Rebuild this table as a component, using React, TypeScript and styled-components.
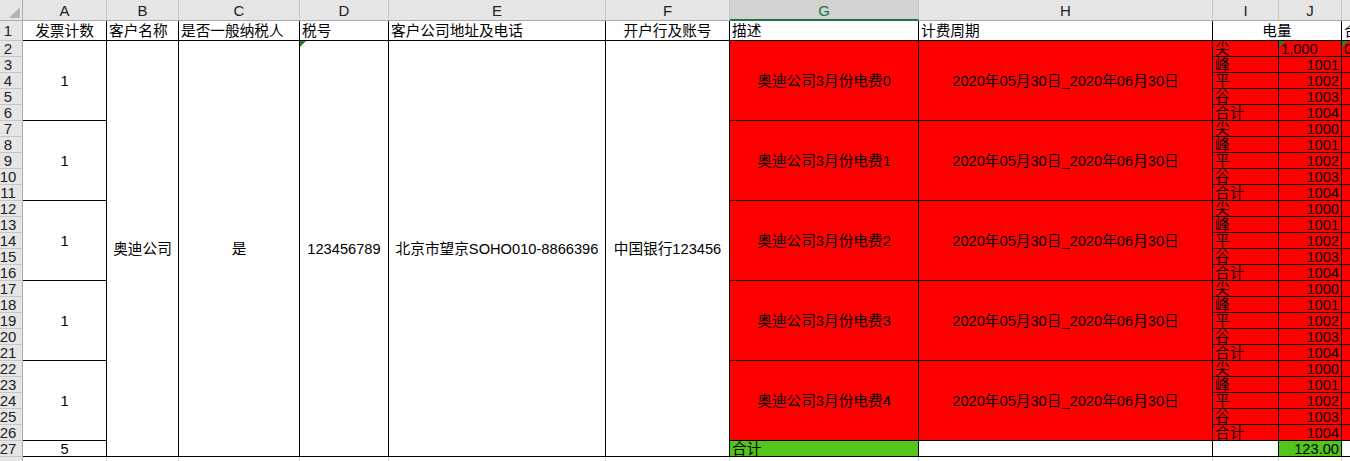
import React from "react";
import styled, { createGlobalStyle, css } from "styled-components";

const GlobalStyle = createGlobalStyle`
  html, body {
    margin: 0;
    padding: 0;
    background: #ffffff;
    overflow: hidden;
  }
  body {
    font-family: "Liberation Sans", "Noto Sans CJK SC", sans-serif;
  }
`;

const COL_WIDTHS = [23, 84, 72, 121, 89, 217, 124, 189, 294, 66, 63, 90];
const LETTERS = ["A", "B", "C", "D", "E", "F", "G", "H", "I", "J", "K"];
const ROW_COUNT = 28;

const RED = "#ff0000";
const GREEN = "#52c41a";

const Sheet = styled.div`
  display: grid;
  grid-template-columns: ${COL_WIDTHS.map((w) => `${w}px`).join(" ")};
  grid-template-rows: 21px 20px repeat(${ROW_COUNT - 1}, 16px);
  width: max-content;
`;

const Corner = styled.div`
  grid-column: 1;
  grid-row: 1;
  background: #e6e6e6;
  border-right: 1px solid #ababab;
  border-bottom: 1px solid #ababab;
  display: flex;
  align-items: flex-end;
  justify-content: flex-end;
  padding: 0 2px 2px 0;
  box-sizing: border-box;
`;

const ColHead = styled.div<{ $c: number; $selected?: boolean }>`
  grid-column: ${(p) => p.$c};
  grid-row: 1;
  background: ${(p) => (p.$selected ? "#d2d2d2" : "#e6e6e6")};
  border-right: 1px solid #c6c6c6;
  border-bottom: ${(p) => (p.$selected ? "2px solid #217346" : "1px solid #ababab")};
  color: ${(p) => (p.$selected ? "#217346" : "#222")};
  font-size: 15px;
  display: flex;
  align-items: center;
  justify-content: center;
  box-sizing: border-box;
  overflow: hidden;
  padding-top: 1px;
`;

const RowHead = styled.div<{ $r: number }>`
  grid-column: 1;
  grid-row: ${(p) => p.$r};
  background: #e6e6e6;
  border-right: 1px solid #ababab;
  border-bottom: 1px solid #c6c6c6;
  color: #222;
  font-size: 15px;
  line-height: 15px;
  display: flex;
  align-items: center;
  justify-content: center;
  padding-right: 6px;
  box-sizing: border-box;
  overflow: hidden;
`;

type Align = "left" | "center" | "right";

const Cell = styled.div<{
  $c: number;
  $r: number;
  $cs?: number;
  $rs?: number;
  $align?: Align;
  $bg?: string;
  $mark?: boolean;
}>`
  grid-column: ${(p) => p.$c} / span ${(p) => p.$cs ?? 1};
  grid-row: ${(p) => p.$r} / span ${(p) => p.$rs ?? 1};
  background: ${(p) => p.$bg ?? "#ffffff"};
  border-right: 1px solid #000;
  border-bottom: 1px solid #000;
  box-sizing: border-box;
  display: flex;
  align-items: center;
  justify-content: ${(p) =>
    p.$align === "center" ? "center" : p.$align === "right" ? "flex-end" : "flex-start"};
  padding: 0 2px;
  font-size: 14.67px;
  line-height: 16px;
  color: #000;
  white-space: nowrap;
  overflow: hidden;
  position: relative;
  ${(p) =>
    p.$mark &&
    css`
      &::before {
        content: "";
        position: absolute;
        left: 0;
        top: 0;
        width: 0;
        height: 0;
        border-top: 6px solid #1f8a1f;
        border-right: 6px solid transparent;
      }
    `}
`;

const BlankCell = styled.div<{ $c: number; $r: number }>`
  grid-column: ${(p) => p.$c};
  grid-row: ${(p) => p.$r};
  border-right: 1px solid #d4d4d4;
  border-bottom: 1px solid #d4d4d4;
  box-sizing: border-box;
`;

// spreadsheet row n -> grid row n + 1, column letter index i -> grid column i + 2
const R = (n: number) => n + 1;
const C = (letter: string) => LETTERS.indexOf(letter) + 2;

const PERIODS = ["尖", "峰", "平", "谷", "合计"];
const PERIOD_LABEL = "2020年05月30日_2020年06月30日";

export default function App() {
  const blocks = [0, 1, 2, 3, 4];

  return (
    <>
      <GlobalStyle />
      <Sheet>
        <Corner>
          <svg width="11" height="11" viewBox="0 0 11 11">
            <polygon points="11,0 11,11 0,11" fill="#b4b4b4" />
          </svg>
        </Corner>
        {LETTERS.map((l, i) => (
          <ColHead key={l} $c={i + 2} $selected={l === "G"}>
            {l}
          </ColHead>
        ))}
        {Array.from({ length: ROW_COUNT }, (_, i) => (
          <RowHead key={i} $r={R(i + 1)}>
            {i + 1 < ROW_COUNT ? i + 1 : ""}
          </RowHead>
        ))}

        {/* Row 1: titles */}
        <Cell $c={C("A")} $r={R(1)} $align="center">发票计数</Cell>
        <Cell $c={C("B")} $r={R(1)}>客户名称</Cell>
        <Cell $c={C("C")} $r={R(1)}>是否一般纳税人</Cell>
        <Cell $c={C("D")} $r={R(1)}>税号</Cell>
        <Cell $c={C("E")} $r={R(1)}>客户公司地址及电话</Cell>
        <Cell $c={C("F")} $r={R(1)} $align="center">开户行及账号</Cell>
        <Cell $c={C("G")} $r={R(1)}>描述</Cell>
        <Cell $c={C("H")} $r={R(1)}>计费周期</Cell>
        <Cell $c={C("I")} $r={R(1)} $cs={2} $align="center">电量</Cell>
        <Cell $c={C("K")} $r={R(1)}>合计电费</Cell>

        {/* Merged customer columns */}
        <Cell $c={C("B")} $r={R(2)} $rs={26} $align="center">奥迪公司</Cell>
        <Cell $c={C("C")} $r={R(2)} $rs={26} $align="center">是</Cell>
        <Cell $c={C("D")} $r={R(2)} $rs={26} $align="center" $mark>123456789</Cell>
        <Cell $c={C("E")} $r={R(2)} $rs={26} $align="center">北京市望京SOHO010-8866396</Cell>
        <Cell $c={C("F")} $r={R(2)} $rs={26} $align="center">中国银行123456</Cell>

        {blocks.map((k) => {
          const start = 2 + k * 5;
          return (
            <React.Fragment key={k}>
              <Cell $c={C("A")} $r={R(start)} $rs={5} $align="center">1</Cell>
              <Cell $c={C("G")} $r={R(start)} $rs={5} $align="center" $bg={RED}>
                奥迪公司3月份电费{k}
              </Cell>
              <Cell $c={C("H")} $r={R(start)} $rs={5} $align="center" $bg={RED}>
                {PERIOD_LABEL}
              </Cell>
              {PERIODS.map((p, j) => {
                const row = start + j;
                const first = k === 0 && j === 0;
                return (
                  <React.Fragment key={p}>
                    <Cell $c={C("I")} $r={R(row)} $bg={RED}>{p}</Cell>
                    <Cell
                      $c={C("J")}
                      $r={R(row)}
                      $bg={RED}
                      $align={first ? "left" : "right"}
                      $mark={first}
                    >
                      {first ? "1,000" : 1000 + j}
                    </Cell>
                    <Cell $c={C("K")} $r={R(row)} $bg={RED} $mark={first}>
                      {first ? "0" : ""}
                    </Cell>
                  </React.Fragment>
                );
              })}
            </React.Fragment>
          );
        })}

        {/* Row 27: totals */}
        <Cell $c={C("A")} $r={R(27)} $align="center">5</Cell>
        <Cell $c={C("G")} $r={R(27)} $bg={GREEN}>合计</Cell>
        <Cell $c={C("H")} $r={R(27)} />
        <Cell $c={C("I")} $r={R(27)} />
        <Cell $c={C("J")} $r={R(27)} $bg={GREEN} $align="right">123.00</Cell>
        <Cell $c={C("K")} $r={R(27)} />

        {/* Row 28: empty grid */}
        {LETTERS.map((l) => (
          <BlankCell key={l} $c={C(l)} $r={R(28)} />
        ))}
      </Sheet>
    </>
  );
}
